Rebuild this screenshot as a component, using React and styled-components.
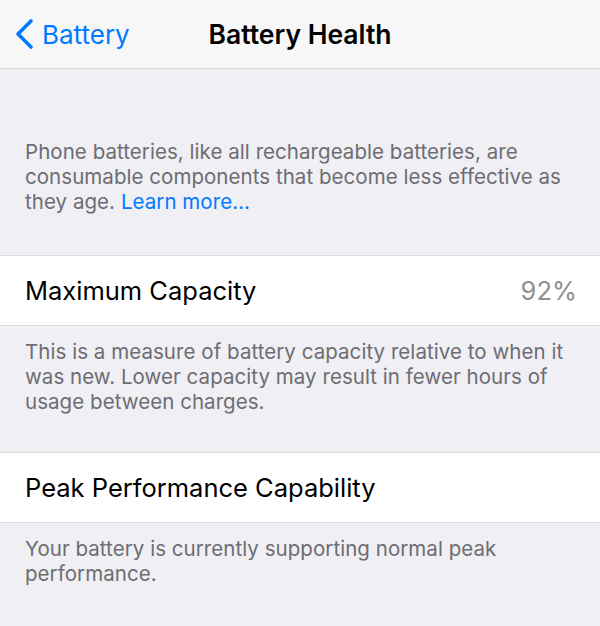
import styled, { createGlobalStyle } from "styled-components";

const Global = createGlobalStyle`
  html, body {
    margin: 0;
    padding: 0;
    background: #efeff4;
  }
  body {
    font-family: Inter, "Noto Sans", "Liberation Sans", sans-serif;
    -webkit-font-smoothing: antialiased;
  }
`;

const Screen = styled.div`
  width: 600px;
  min-height: 626px;
  background: #efeff4;
  display: flex;
  flex-direction: column;
`;

const NavBar = styled.header`
  height: 69px;
  background: #f7f7f7;
  border-bottom: 1px solid #d4d4d8;
  display: grid;
  grid-template-columns: 1fr auto 1fr;
  align-items: center;
  box-sizing: border-box;
`;

const BackButton = styled.a`
  display: flex;
  align-items: center;
  gap: 8px;
  padding-left: 14px;
  color: #007aff;
  font-size: 26px;
  text-decoration: none;
  cursor: pointer;
`;

const Title = styled.h1`
  margin: 0;
  font-size: 26.5px;
  font-weight: 600;
  color: #000;
`;

const Footer = styled.p`
  margin: 0;
  padding: ${(p) => p.$pad || "13px 25px 38px"};
  font-size: 20.5px;
  line-height: 25px;
  color: #6d6d72;
  letter-spacing: 0.05px;
`;

const Link = styled.a`
  color: #007aff;
  text-decoration: none;
  cursor: pointer;
`;

const Row = styled.div`
  height: 69px;
  background: #fff;
  border-top: 1px solid #dcdce0;
  border-bottom: 1px solid #dcdce0;
  display: flex;
  align-items: center;
  justify-content: space-between;
  padding: 0 23px 0 25px;
`;

const Label = styled.span`
  font-size: 25.5px;
  color: #000;
`;

const Value = styled.span`
  font-size: 25.5px;
  color: #8e8e93;
`;

const Chevron = () => (
  <svg width="20" height="32" viewBox="0 0 20 32" fill="none">
    <path
      d="M17 3 L4 16 L17 29"
      stroke="#007aff"
      strokeWidth="3.6"
      strokeLinecap="round"
      strokeLinejoin="round"
    />
  </svg>
);

export default function App() {
  return (
    <>
      <Global />
      <Screen>
        <NavBar>
          <BackButton>
            <Chevron />
            Battery
          </BackButton>
          <Title>Battery Health</Title>
          <span />
        </NavBar>

        <Footer $pad="70px 25px 41px">
          Phone batteries, like all rechargeable batteries, are consumable
          components that become less effective as they age.{" "}
          <Link>Learn more…</Link>
        </Footer>

        <Row>
          <Label>Maximum Capacity</Label>
          <Value>92%</Value>
        </Row>
        <Footer>
          This is a measure of battery capacity relative to when it was new.
          Lower capacity may result in fewer hours of usage between charges.
        </Footer>

        <Row>
          <Label>Peak Performance Capability</Label>
        </Row>
        <Footer>
          Your battery is currently supporting normal peak performance.
        </Footer>
      </Screen>
    </>
  );
}
